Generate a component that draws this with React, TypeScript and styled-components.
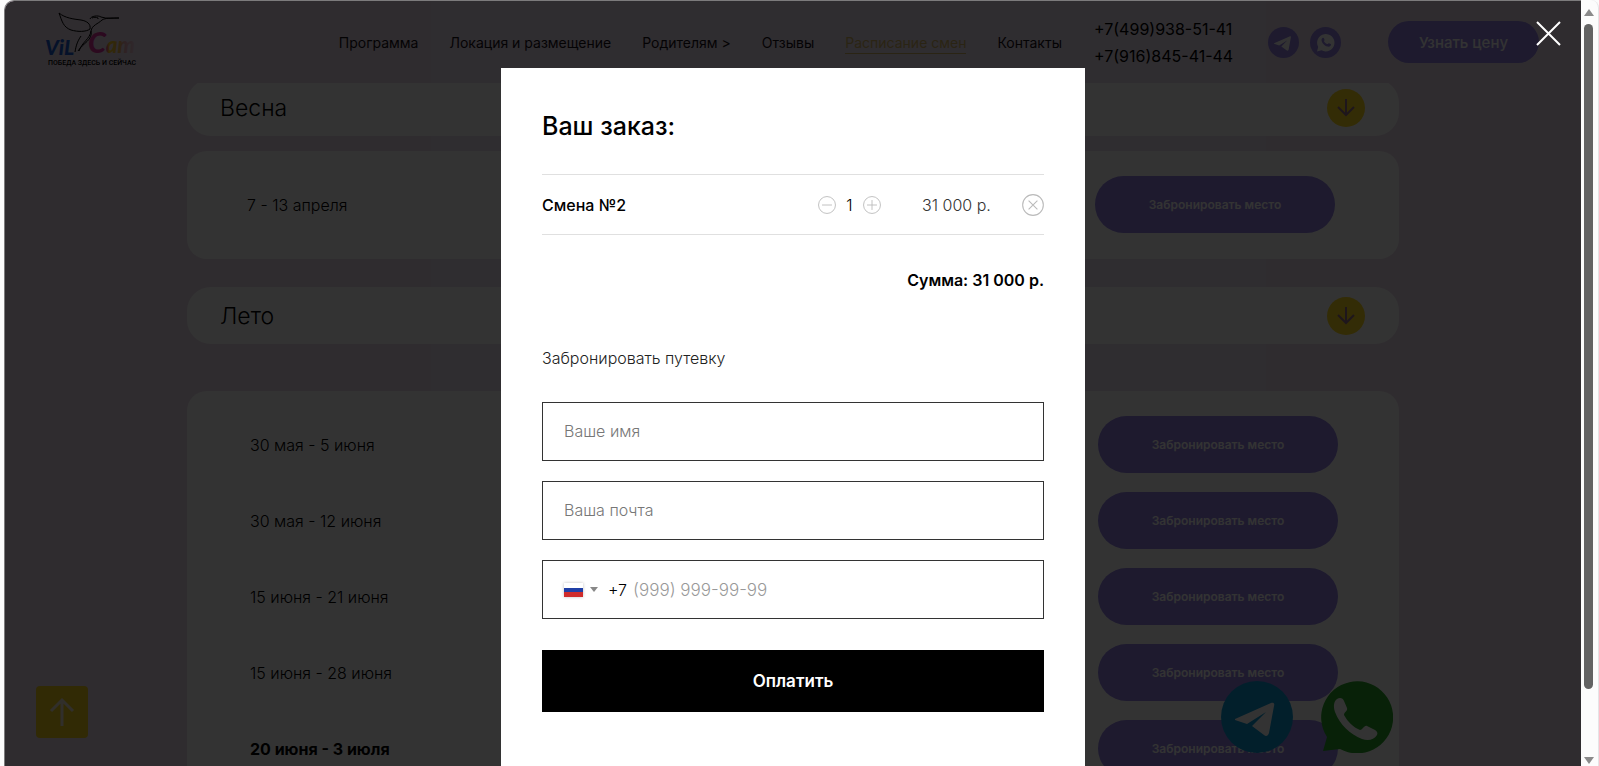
import React from 'react';
import styled, { createGlobalStyle } from 'styled-components';

const backdrop = 'linear-gradient(90deg, #ebdceb 27%, #ecdfef 27%, #ecdfef 80%, #ebdceb 80%)';

const GlobalStyle = createGlobalStyle`
  *, *::before, *::after { box-sizing: border-box; }
  body { margin: 0; background: #fcfcfc; }
  body, button, input { font-family: Inter, "Liberation Sans", sans-serif; }
  button { border: 0; padding: 0; cursor: pointer; }
  a { color: inherit; text-decoration: none; }
  h1, h2, h3, p, ul { margin: 0; padding: 0; font-weight: inherit; }
  ul { list-style: none; }
`;

const Window = styled.div`
  display: flex;
  height: 100vh;
  padding-left: 4px;
  overflow: hidden;
`;

const Page = styled.div`
  position: relative;
  flex: 1;
  overflow: hidden;
  border-top: 1px solid #7c7b7c;
  border-left: 1px solid #7c7b7c;
  border-top-left-radius: 10px;
  background: ${backdrop};
  color: #000;
`;

const ScrollRail = styled.div`
  display: flex;
  flex-direction: column;
  align-items: center;
  justify-content: space-between;
  width: 18px;
  padding: 9px 2px 2px 0;
  border-right: 1px solid #e4e4e6;
  border-top-right-radius: 8px;
`;

const ScrollThumb = styled.div`
  flex: 1;
  width: 9px;
  margin: 8px 0 68px;
  border-radius: 5px;
  background: #636363;
`;

/* Site header */

const Header = styled.header`
  position: relative;
  z-index: 1;
  display: flex;
  align-items: center;
  height: 82px;
  padding: 0 42px 0 40px;
  background: ${backdrop};
`;

const Nav = styled.nav`
  display: flex;
  gap: 31px;
  margin-left: auto;
  padding-top: 3px;
  font-size: 14px;
  line-height: 20px;
  white-space: nowrap;
`;

const NavLink = styled.a<{ $active?: boolean }>`
  color: ${(p) => (p.$active ? '#d2b464' : '#181018')};
  border-bottom: 1px solid ${(p) => (p.$active ? '#d2b464' : 'transparent')};
`;

const Phones = styled.div`
  display: flex;
  flex-direction: column;
  width: 174px;
  margin-left: 32px;
  padding-top: 1px;
  font-size: 16px;
  line-height: 27px;
  white-space: nowrap;
`;

const Socials = styled.div`
  display: flex;
  gap: 11px;
  margin-right: 47px;
`;

const SocialLink = styled.a`
  display: flex;
  width: 31px;
  height: 31px;
`;

const PriceButton = styled.button`
  width: 151px;
  height: 42px;
  border-radius: 21px;
  background: #9482e6;
  color: #fff;
  font-size: 15px;
  font-weight: 500;
`;

/* Schedule */

const Schedule = styled.main`
  display: flex;
  flex-direction: column;
  width: calc(100% - 364px);
  margin: -4px auto 0;
`;

const SeasonBar = styled.section`
  display: flex;
  align-items: center;
  justify-content: space-between;
  height: 57px;
  padding: 0 34px 0 33px;
  border-radius: 24px;
  background: #fff;
`;

const SeasonTitle = styled.h2`
  font-size: 23px;
  font-weight: 300;
  line-height: 30px;
`;

const RoundButton = styled.button`
  display: flex;
  align-items: center;
  justify-content: center;
  width: 38px;
  height: 38px;
  border-radius: 50%;
  background: #ffd91f;
`;

const ShiftList = styled.ul<{ $top: number; $bottom: number; $left: number; $right: number }>`
  display: flex;
  flex-direction: column;
  gap: 19px;
  margin: ${(p) => p.$top}px 0 ${(p) => p.$bottom}px;
  padding: 25px ${(p) => p.$right}px 26px ${(p) => p.$left}px;
  border-radius: 20px;
  background: #fff;
`;

const Shift = styled.li<{ $bold?: boolean }>`
  display: flex;
  align-items: center;
  justify-content: space-between;
  font-size: 16px;
  font-weight: ${(p) => (p.$bold ? 700 : 300)};
`;

const BookButton = styled.button`
  width: 240px;
  height: 57px;
  border-radius: 29px;
  background: #9482e6;
  color: #fff;
  font-size: 12px;
  font-weight: 600;
`;

const ToTop = styled.button`
  position: absolute;
  left: 31px;
  bottom: 28px;
  display: flex;
  align-items: center;
  justify-content: center;
  width: 52px;
  height: 52px;
  border-radius: 4px;
  background: #f2cf1c;
`;

const Messengers = styled.div`
  position: absolute;
  right: 188px;
  bottom: 13px;
  display: flex;
  gap: 27px;
`;

const MessengerLink = styled.a`
  display: flex;
`;

/* Order dialog */

const Overlay = styled.div`
  position: absolute;
  inset: 0;
  z-index: 2;
  display: flex;
  justify-content: center;
  align-items: flex-start;
  padding-top: 67px;
  background: rgba(0, 0, 0, 0.8);
`;

const CloseButton = styled.button`
  position: absolute;
  top: 20px;
  right: 20px;
  width: 25px;
  height: 25px;
  background: none;
`;

const Dialog = styled.section`
  width: 584px;
  min-height: 100%;
  padding: 41px 41px 60px;
  background: #fff;
  color: #000;
`;

const DialogTitle = styled.h1`
  margin-bottom: 30px;
  font-size: 25px;
  font-weight: 500;
  line-height: 35px;
`;

const Product = styled.div`
  display: flex;
  align-items: center;
  height: 61px;
  border: solid #e0e0e0;
  border-width: 1px 0;
  font-size: 16px;
`;

const ProductName = styled.h3`
  flex: 1;
  font-size: 16px;
  font-weight: 500;
`;

const Amount = styled.div`
  display: flex;
  align-items: center;
  justify-content: space-between;
  width: 63px;
  margin-right: 41px;
  font-weight: 300;
`;

const Price = styled.span`
  width: 100px;
  color: #333;
  font-weight: 300;
  white-space: nowrap;
`;

const IconButton = styled.button`
  display: flex;
  background: none;
`;

const Total = styled.p`
  margin: 33px 0 53px;
  text-align: right;
  font-size: 16px;
  font-weight: 600;
  line-height: 24px;
`;

const Lead = styled.p`
  margin-bottom: 30px;
  color: #222;
  font-size: 16px;
  font-weight: 300;
  line-height: 27px;
`;

const Form = styled.form`
  display: flex;
  flex-direction: column;
  gap: 20px;
`;

const fieldText = `
  font-size: 16px;
  font-weight: 300;
  color: #000;
  &::placeholder { color: #777; opacity: 1; }
`;

const TextField = styled.input`
  width: 100%;
  height: 59px;
  padding: 0 21px 2px;
  border: 1px solid #333;
  border-radius: 0;
  background: #fff;
  ${fieldText}
`;

const PhoneField = styled.div`
  display: flex;
  align-items: center;
  height: 59px;
  padding: 0 21px;
  border: 1px solid #333;
  font-size: 16px;
`;

const CountryButton = styled.button`
  display: flex;
  align-items: center;
  gap: 7px;
  margin-right: 10px;
  background: none;
`;

const Flag = styled.span`
  width: 19px;
  height: 14px;
  background: linear-gradient(#fff 33%, #1f3fa6 33%, #1f3fa6 67%, #cf2b2b 67%);
  box-shadow: 0 0 3px rgba(0, 0, 0, 0.25);
`;

const DialCode = styled.span`
  font-weight: 300;
`;

const PhoneInput = styled.input`
  flex: 1;
  min-width: 0;
  margin-left: 6px;
  padding: 0;
  border: 0;
  background: none;
  ${fieldText}
  font-size: 17px;
  &::placeholder { color: #999; }
`;

const PayButton = styled.button`
  height: 62px;
  margin-top: 11px;
  background: #000;
  color: #fff;
  font-size: 17px;
  font-weight: 600;
`;

/* Drawings */

const Logo = () => (
  <svg width="104" height="56" viewBox="0 0 104 56" role="img" aria-label="ViLi Camp">
    <defs>
      <linearGradient id="camp" gradientUnits="userSpaceOnUse" x1="44" x2="92" y1="0" y2="0">
        <stop offset="0" stopColor="#e0349c" />
        <stop offset="0.36" stopColor="#d6309a" />
        <stop offset="0.42" stopColor="#ffd21f" />
        <stop offset="0.62" stopColor="#f0b84a" />
        <stop offset="0.74" stopColor="#eaa8b0" />
        <stop offset="1" stopColor="#e9cfe4" />
      </linearGradient>
    </defs>
    <g fill="none" stroke="#000" strokeWidth="1">
      <path d="M14 1C17 9 18 15 26 18c7 2 15 2 19-1C46 12 42 9 36 8 28 7 20 6 14 1Z" />
      <path d="M45 7c1-3 8-4 11-2 6 2 12 1 18 1-8 0-14 0-17 2-4 4-10 5-11 11-1 8-9 11-12 20" />
      <path d="M46 19c2 9-8 12-13 20M36 24c-4 6-5 10-6 16M47 6c2-1 4-1 6 0v1" />
    </g>
    <g fontFamily="Lato, sans-serif" fontWeight="900" fontStyle="italic">
      <text x="0" y="43" fontSize="21" fill="#1c5bd0">
        ViL
      </text>
      <text x="43" y="41" fontSize="29" fill="url(#camp)">
        C<tspan fontSize="22">am</tspan>
      </text>
    </g>
    <text x="3" y="53" fontFamily="Roboto, sans-serif" fontSize="7" fontWeight="500">
      ПОБЕДА ЗДЕСЬ И СЕЙЧАС
    </text>
  </svg>
);

const planePath = 'M14 38 50 22c2-1 4 0 3 3l-5 27c-1 3-3 4-5 2L31 45 45 31 26 43 14 39Z';
const phonePath =
  'M17 18c3-2 6-1 7 2l3 7c1 3-3 4-3 7 4 7 9 12 16 15 3 0 4-5 7-4l8 4c2 1 3 3 2 5-3 5-9 6-15 4C30 53 20 44 15 31c-2-6-1-11 2-13Z';

const TelegramIcon = ({ size, fill }: { size: number; fill: string }) => (
  <svg width={size} height={size} viewBox="0 0 72 72" aria-hidden="true">
    <circle cx="36" cy="36" r="36" fill={fill} />
    <path d={planePath} fill="#fff" />
  </svg>
);

const SmallWhatsapp = () => (
  <svg width="31" height="31" viewBox="0 0 31 31" aria-hidden="true">
    <circle cx="15.5" cy="15.5" r="15.5" fill="#9482e6" />
    <path d="M7 24.500 8.200 20A8.700 8.700 0 1 1 11.500 23.300Z" fill="#fff" />
    <path
      d="M12.500 11c1-.8 1.500 0 2 1.700.3.900-.8 1-.4 1.700 1 1.700 2 2.300 3.200 2.700.7.200.9-1.300 1.700-.9l1.700.9c1 .5-.4 2.500-1.700 2.700-3.600 0-7.600-3.600-7.500-7 0-.8.400-1.400 1-1.800Z"
      fill="#9482e6"
    />
  </svg>
);

const DownArrow = () => (
  <svg width="18" height="19" viewBox="0 0 18 19" fill="none" stroke="#94708a" strokeWidth="2" aria-hidden="true">
    <path d="M9 1v16M1 9l8 8 8-8" />
  </svg>
);

const UpArrow = () => (
  <svg width="28" height="30" viewBox="0 0 28 30" fill="none" stroke="#f4ecd8" strokeWidth="3" aria-hidden="true">
    <path d="M14 29V3M3 14 14 3l11 11" />
  </svg>
);

const CircleIcon = ({ size, d }: { size: number; d: string }) => (
  <svg width={size} height={size} viewBox="0 0 20 20" fill="none" stroke="#bbb" aria-hidden="true">
    <circle cx="10" cy="10" r="9.400" />
    <path d={d} />
  </svg>
);

const Triangle = ({ d, width, height, fill }: { d: string; width: number; height: number; fill: string }) => (
  <svg width={width} height={height} viewBox={`0 0 ${width} ${height}`} aria-hidden="true">
    <path d={d} fill={fill} />
  </svg>
);

const navItems = ['Программа', 'Локация и размещение', 'Родителям >', 'Отзывы', 'Расписание смен', 'Контакты'];
const phones = ['+7(499)938-51-41', '+7(916)845-41-44'];
const springShifts = ['7 - 13 апреля'];
const summerShifts = ['30 мая - 5 июня', '30 мая - 12 июня', '15 июня - 21 июня', '15 июня - 28 июня', '20 июня - 3 июля'];

const Season = ({ title }: { title: string }) => (
  <SeasonBar>
    <SeasonTitle>{title}</SeasonTitle>
    <RoundButton type="button" aria-label={`Показать: ${title}`}>
      <DownArrow />
    </RoundButton>
  </SeasonBar>
);

const Shifts = ({
  dates,
  ...spacing
}: {
  dates: string[];
  $top: number;
  $bottom: number;
  $left: number;
  $right: number;
}) => (
  <ShiftList {...spacing}>
    {dates.map((date) => (
      <Shift key={date} $bold={date.startsWith('20')}>
        {date}
        <BookButton type="button">Забронировать место</BookButton>
      </Shift>
    ))}
  </ShiftList>
);

export default function App() {
  return (
    <>
      <GlobalStyle />
      <Window>
        <Page>
          <Header>
            <a href="#home">
              <Logo />
            </a>
            <Nav>
              {navItems.map((item) => (
                <NavLink key={item} href="#nav" $active={item === 'Расписание смен'}>
                  {item}
                </NavLink>
              ))}
            </Nav>
            <Phones>
              {phones.map((phone) => (
                <a key={phone} href={`tel:${phone}`}>
                  {phone}
                </a>
              ))}
            </Phones>
            <Socials>
              <SocialLink href="#telegram" aria-label="Telegram">
                <TelegramIcon size={31} fill="#9482e6" />
              </SocialLink>
              <SocialLink href="#whatsapp" aria-label="WhatsApp">
                <SmallWhatsapp />
              </SocialLink>
            </Socials>
            <PriceButton type="button">Узнать цену</PriceButton>
          </Header>

          <Schedule>
            <Season title="Весна" />
            <Shifts dates={springShifts} $top={15} $bottom={28} $left={60} $right={64} />
            <Season title="Лето" />
            <Shifts dates={summerShifts} $top={47} $bottom={40} $left={63} $right={61} />
          </Schedule>

          <ToTop type="button" aria-label="Наверх">
            <UpArrow />
          </ToTop>
          <Messengers>
            <MessengerLink href="#telegram" aria-label="Telegram">
              <TelegramIcon size={72} fill="#0b9ad8" />
            </MessengerLink>
            <MessengerLink href="#whatsapp" aria-label="WhatsApp">
              <svg width="73" height="72" viewBox="0 0 73 72" aria-hidden="true">
                <path d="M3 70 7 56A36 36 0 1 1 20 68Z" fill="#2aa52a" />
                <path d={phonePath} fill="#fff" />
              </svg>
            </MessengerLink>
          </Messengers>

          <Overlay>
            <CloseButton type="button" aria-label="Закрыть">
              <svg width="25" height="25" viewBox="0 0 25 25" stroke="#fff" strokeWidth="2" aria-hidden="true">
                <path d="M1 1l23 23M24 1 1 24" />
              </svg>
            </CloseButton>
            <Dialog role="dialog" aria-labelledby="order-title">
              <DialogTitle id="order-title">Ваш заказ:</DialogTitle>
              <Product>
                <ProductName>Смена №2</ProductName>
                <Amount>
                  <IconButton type="button" aria-label="Меньше">
                    <CircleIcon size={18} d="M4.500 10h11" />
                  </IconButton>
                  <span>1</span>
                  <IconButton type="button" aria-label="Больше">
                    <CircleIcon size={18} d="M4.500 10h11M10 4.500v11" />
                  </IconButton>
                </Amount>
                <Price>31 000 р.</Price>
                <IconButton type="button" aria-label="Удалить">
                  <CircleIcon size={22} d="M6 6l8 8M14 6l-8 8" />
                </IconButton>
              </Product>
              <Total>Сумма: 31 000 р.</Total>
              <Lead>Забронировать путевку</Lead>
              <Form>
                <TextField type="text" placeholder="Ваше имя" aria-label="Ваше имя" />
                <TextField type="email" placeholder="Ваша почта" aria-label="Ваша почта" />
                <PhoneField>
                  <CountryButton type="button" aria-label="Страна: Россия">
                    <Flag />
                    <Triangle d="M0 0h8L4 5Z" width={8} height={5} fill="#888" />
                  </CountryButton>
                  <DialCode>+7</DialCode>
                  <PhoneInput type="tel" placeholder="(999) 999-99-99" aria-label="Телефон" />
                </PhoneField>
                <PayButton type="submit">Оплатить</PayButton>
              </Form>
            </Dialog>
          </Overlay>
        </Page>
        <ScrollRail aria-hidden="true">
          <Triangle d="M5 0l5 7H0Z" width={10} height={7} fill="#8a8a8a" />
          <ScrollThumb />
          <Triangle d="M0 0h10L5 7Z" width={10} height={7} fill="#8a8a8a" />
        </ScrollRail>
      </Window>
    </>
  );
}
